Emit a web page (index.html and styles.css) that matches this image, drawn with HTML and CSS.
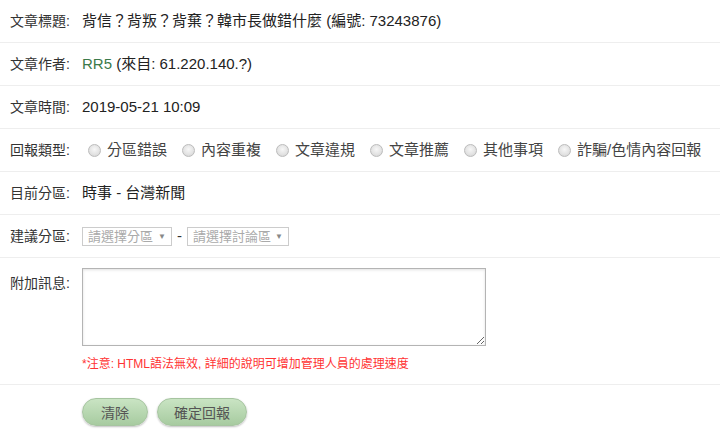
FILE: index.html
```html
<!DOCTYPE html>
<html lang="zh-Hant">
<head>
  <meta charset="UTF-8" />
  <meta name="viewport" content="width=device-width, initial-scale=1.0" />
  <title>文章回報</title>
  <link rel="stylesheet" href="styles.css">
</head>
<body>

  <div class="report">
    <div class="row">
      <div class="label">文章標題:</div>
      <div class="value">背信？背叛？背棄？韓市長做錯什麼 (編號: 73243876)</div>
    </div>

    <div class="row">
      <div class="label">文章作者:</div>
      <div class="value"><span class="author">RR5</span> (來自: 61.220.140.?)</div>
    </div>

    <div class="row">
      <div class="label">文章時間:</div>
      <div class="value">2019-05-21 10:09</div>
    </div>

    <div class="row">
      <div class="label">回報類型:</div>
      <div class="value types">
        <label class="type"><input type="radio" name="type" />分區錯誤</label>
        <label class="type"><input type="radio" name="type" />內容重複</label>
        <label class="type"><input type="radio" name="type" />文章違規</label>
        <label class="type"><input type="radio" name="type" />文章推薦</label>
        <label class="type"><input type="radio" name="type" />其他事項</label>
        <label class="type"><input type="radio" name="type" />詐騙/色情內容回報</label>
      </div>
    </div>

    <div class="row">
      <div class="label">目前分區:</div>
      <div class="value">時事 - 台灣新聞</div>
    </div>

    <div class="row">
      <div class="label">建議分區:</div>
      <div class="value selects">
        <span class="select select-board">請選擇分區</span>
        <span class="dash">-</span>
        <span class="select select-forum">請選擇討論區</span>
      </div>
    </div>

    <div class="row row-message">
      <div class="label">附加訊息:</div>
      <div class="value">
        <textarea class="message"></textarea>
        <p class="note">*注意: HTML語法無效, 詳細的說明可增加管理人員的處理速度</p>
      </div>
    </div>

    <div class="row row-actions">
      <div class="label"></div>
      <div class="value actions">
        <button class="btn btn-clear">清除</button>
        <button class="btn btn-submit">確定回報</button>
      </div>
    </div>
  </div>

</body>
</html>
```

FILE: styles.css
```css
* {
  box-sizing: border-box;
}

body {
  margin: 0;
  padding: 0;
  font-family: "Liberation Sans", "Noto Sans CJK TC", sans-serif;
  font-size: 15px;
  color: #222;
  background: #fff;
}

.row {
  display: flex;
  align-items: center;
  height: 43px;
  border-bottom: 1px solid #eee;
}

.label {
  width: 82px;
  flex-shrink: 0;
  padding-left: 10px;
  font-size: 14px;
  color: #333;
  line-height: 18px;
}

.value {
  line-height: 18px;
  white-space: nowrap;
}

.author {
  color: #3b7a4a;
}

.types {
  display: flex;
  align-items: center;
}

.type {
  display: flex;
  align-items: center;
  margin-right: 15px;
  color: #444;
  white-space: nowrap;
}

.type input {
  appearance: none;
  -webkit-appearance: none;
  width: 13px;
  height: 13px;
  margin: 0 6px 0 0;
  border: 1px solid #bcbcbc;
  border-radius: 50%;
  background: radial-gradient(circle at 50% 40%, #f7f7f7 0%, #e2e2e2 60%, #cfcfcf 100%);
}

.type:first-child input {
  margin-left: 6px;
}

.selects {
  display: flex;
  align-items: center;
}

.select {
  position: relative;
  display: inline-block;
  height: 19px;
  line-height: 17px;
  padding-left: 5px;
  border: 1px solid #ccc;
  font-size: 13px;
  color: #aaa;
  background: #fff;
}

.select::after {
  content: "▼";
  position: absolute;
  right: 5px;
  top: 0;
  font-size: 8px;
  color: #888;
}

.select-board {
  width: 90px;
}

.select-forum {
  width: 102px;
}

.dash {
  margin: 0 5px;
  color: #333;
}

.row-message {
  height: 127px;
  align-items: flex-start;
  padding-top: 10px;
}

.row-message .label {
  padding-top: 6px;
}

.message {
  display: block;
  width: 404px;
  height: 78px;
  margin: 0;
  border: 1px solid #b4b4b4;
  box-shadow: inset 0 1px 3px rgba(0, 0, 0, 0.12);
  resize: both;
}

.note {
  margin: 9px 0 0;
  font-size: 12px;
  color: #f33;
}

.row-actions {
  height: 54px;
  border-bottom: none;
}

.actions {
  display: flex;
  gap: 9px;
}

.btn {
  height: 28px;
  border-radius: 14px;
  border: 1px solid #a6c4a0;
  background: linear-gradient(#c9e4c3, #a7cba0);
  box-shadow: 0 1px 2px rgba(0, 0, 0, 0.25);
  color: #555;
  font-family: "Liberation Sans", "Noto Sans CJK TC", sans-serif;
  font-size: 14px;
  cursor: pointer;
}

.btn-clear {
  width: 66px;
}

.btn-submit {
  width: 90px;
}
```
